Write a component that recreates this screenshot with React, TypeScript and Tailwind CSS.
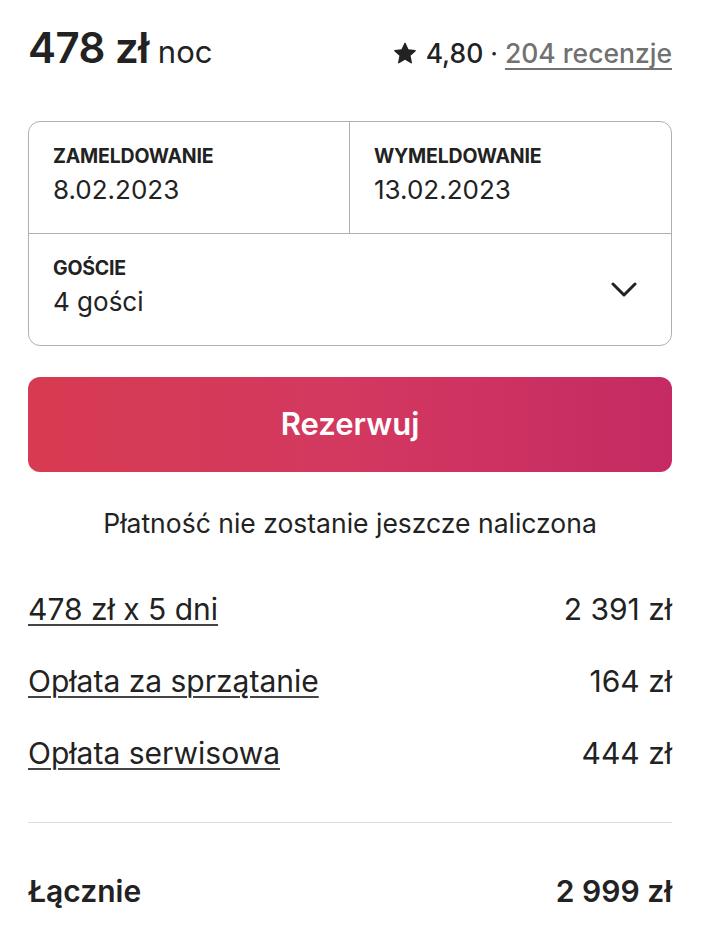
const rows = [
  { label: '478 zł x 5 dni', value: '2 391 zł' },
  { label: 'Opłata za sprzątanie', value: '164 zł' },
  { label: 'Opłata serwisowa', value: '444 zł' },
];

function Field({ label, value }: { label: string; value: string }) {
  return (
    <div>
      <div className="text-[19.5px] leading-[24px] font-bold tracking-[-0.2px]">{label}</div>
      <div className="text-[26px] leading-[32px] mt-[6px]">{value}</div>
    </div>
  );
}

export default function App() {
  return (
    <div
      className="w-[712px] h-[946px] bg-white pl-7 pr-10 text-[#222222]"
      style={{ fontFamily: 'Inter, "Noto Sans", sans-serif' }}
    >
      <div className="flex items-baseline justify-between pt-[27px] h-[73px]">
        <div className="flex items-baseline gap-[9px]">
          <span className="text-[42px] leading-[42px] font-semibold tracking-[-0.5px]">478 zł</span>
          <span className="text-[31px] leading-[42px]">noc</span>
        </div>
        <div className="flex items-baseline text-[26.5px] leading-[42px]">
          <svg viewBox="0 0 32 32" className="w-[22px] h-[22px] mr-[10px] fill-[#222222] self-center">
            <path d="M15.1 1.58l-4.13 8.88-9.86 1.27a1 1 0 0 0-.54 1.74l7.3 6.57-1.97 9.85a1 1 0 0 0 1.48 1.06l8.62-5 8.63 5a1 1 0 0 0 1.48-1.06l-1.97-9.85 7.3-6.57a1 1 0 0 0-.55-1.73l-9.86-1.28-4.12-8.88a1 1 0 0 0-1.82 0z" />
          </svg>
          <span className="font-medium">4,80</span>
          <span className="mx-[7px]">·</span>
          <span className="text-[#717171] font-medium underline underline-offset-[5px] decoration-[1.5px]">204 recenzje</span>
        </div>
      </div>

      <div className="mt-[48px] border border-[#b0b0b0] rounded-xl">
        <div className="grid grid-cols-2 border-b border-[#b0b0b0]">
          <div className="h-[111px] pl-[24px] pt-[22px] border-r border-[#b0b0b0]">
            <Field label="ZAMELDOWANIE" value="8.02.2023" />
          </div>
          <div className="h-[111px] pl-[24px] pt-[22px]">
            <Field label="WYMELDOWANIE" value="13.02.2023" />
          </div>
        </div>
        <div className="h-[111px] pl-[24px] pr-[34px] pt-[22px] flex items-start justify-between">
          <Field label="GOŚCIE" value="4 gości" />
          <svg viewBox="0 0 26 15" className="w-[26px] h-[15px] mt-[26px]" fill="none" stroke="#222222" strokeWidth={3} strokeLinecap="round" strokeLinejoin="round">
            <polyline points="2,2 13,13 24,2" />
          </svg>
        </div>
      </div>

      <button className="mt-[31px] w-full h-[95px] rounded-xl bg-gradient-to-r from-[#d73b51] via-[#d33860] to-[#c52a63] text-white text-[31px] font-semibold">
        Rezerwuj
      </button>

      <div className="mt-[35px] text-center text-[26.5px] leading-[32px]">Płatność nie zostanie jeszcze naliczona</div>

      <div className="mt-[52px] flex flex-col gap-[36px]">
        {rows.map((r) => (
          <div key={r.label} className="flex justify-between text-[30px] leading-[36px]">
            <span className="underline underline-offset-[4px] decoration-[1.5px] decoration-[#444444]">{r.label}</span>
            <span>{r.value}</span>
          </div>
        ))}
      </div>

      <div className="mt-[51px] border-t border-[#dddddd]" />

      <div className="mt-[50px] flex justify-between text-[30px] leading-[36px] font-semibold">
        <span>Łącznie</span>
        <span>2 999 zł</span>
      </div>
    </div>
  );
}
